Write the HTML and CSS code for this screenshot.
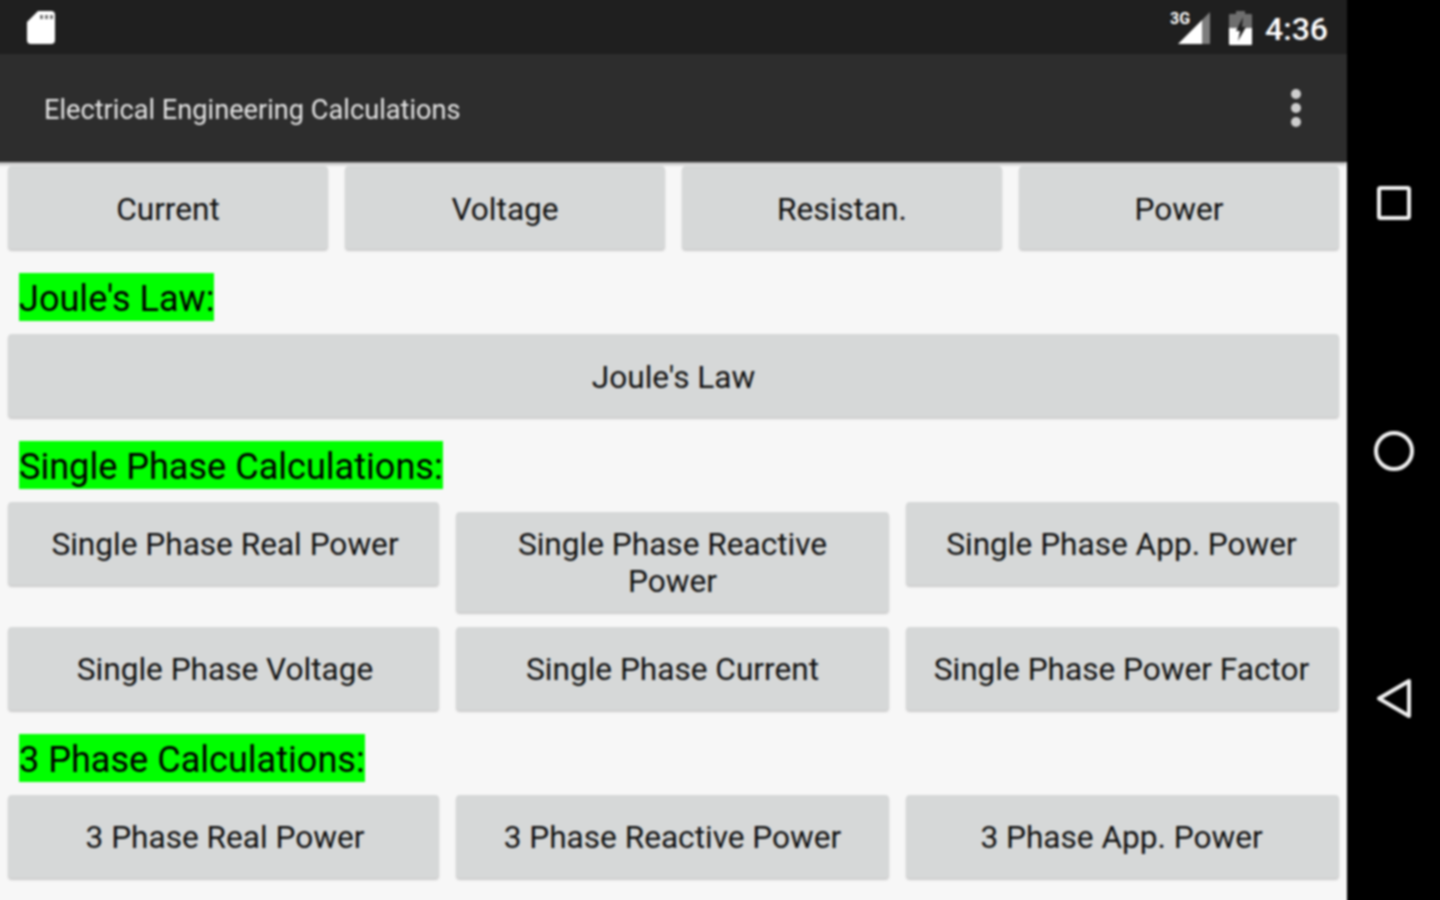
FILE: index.html
```html
<!DOCTYPE html>
<html lang="en">
<head>
  <meta charset="UTF-8">
  <meta name="viewport" content="width=device-width, initial-scale=1.0">
  <title>Electrical Engineering Calculations</title>
  <link rel="stylesheet" href="styles.css">
</head>
<body>
  <div class="device">
    <div class="screen">
      <div class="status-bar">
        <svg class="sd-icon" width="28" height="33" viewBox="0 0 28 33">
          <path fill="#fff" d="M11 0H24Q28 0 28 4V29Q28 33 24 33H4Q0 33 0 29V11Z"/>
          <rect x="13" y="4" width="3" height="4" fill="#777"/>
          <rect x="18" y="4" width="3" height="4" fill="#777"/>
          <rect x="23" y="4" width="3" height="4" fill="#777"/>
        </svg>
        <div class="status-right">
          <div class="signal">
            <svg width="34" height="34" viewBox="0 0 34 34">
              <path fill="#7d7d7d" d="M33 1V33H25V9Z"/>
              <path fill="#fff" d="M25 9V33H1Z"/>
            </svg>
            <span class="signal-type">3G</span>
          </div>
          <svg class="battery" width="23" height="34" viewBox="0 0 23 34">
            <path fill="#6e6e6e" d="M7 0H16V3H22Q23 3 23 4V18H0V4Q0 3 1 3H7Z"/>
            <path fill="#fff" d="M0 17H23V33Q23 34 22 34H1Q0 34 0 33Z"/>
            <path fill="#1f1f1f" d="M14 6 7 20H11L9 30 17 16H13Z"/>
          </svg>
          <span class="clock">4:36</span>
        </div>
      </div>

      <div class="action-bar">
        <span class="app-title">Electrical Engineering Calculations</span>
        <div class="overflow">
          <span class="dot"></span>
          <span class="dot"></span>
          <span class="dot"></span>
        </div>
      </div>

      <div class="content">
        <div class="btn-row cols-4">
          <div class="btn">Current</div>
          <div class="btn">Voltage</div>
          <div class="btn">Resistan.</div>
          <div class="btn">Power</div>
        </div>

        <div class="section-label"><span>Joule's Law:</span></div>
        <div class="btn">Joule's Law</div>

        <div class="section-label"><span>Single Phase Calculations:</span></div>
        <div class="btn-row cols-3">
          <div class="btn">Single Phase Real Power</div>
          <div class="btn two-line">Single Phase Reactive Power</div>
          <div class="btn">Single Phase App. Power</div>
          <div class="btn">Single Phase Voltage</div>
          <div class="btn">Single Phase Current</div>
          <div class="btn">Single Phase Power Factor</div>
        </div>

        <div class="section-label"><span>3 Phase Calculations:</span></div>
        <div class="btn-row cols-3">
          <div class="btn">3 Phase Real Power</div>
          <div class="btn">3 Phase Reactive Power</div>
          <div class="btn">3 Phase App. Power</div>
        </div>
      </div>
    </div>

    <div class="nav-bar">
      <div class="nav-cell">
        <svg width="34" height="34" viewBox="0 0 34 34">
          <rect x="2" y="2" width="30" height="30" rx="1.5" fill="none" stroke="#f0f0f0" stroke-width="4"/>
        </svg>
      </div>
      <div class="nav-cell">
        <svg width="42" height="42" viewBox="0 0 42 42">
          <circle cx="21" cy="21" r="18" fill="none" stroke="#f0f0f0" stroke-width="4"/>
        </svg>
      </div>
      <div class="nav-cell">
        <svg width="36" height="42" viewBox="0 0 36 42">
          <path d="M33 3V38L3 20.5Z" fill="none" stroke="#f0f0f0" stroke-width="4" stroke-linejoin="round"/>
        </svg>
      </div>
    </div>
  </div>
</body>
</html>
```

FILE: styles.css
```css
* {
  margin: 0;
  padding: 0;
  box-sizing: border-box;
}

body {
  font-family: Roboto, "Liberation Sans", sans-serif;
  background: #000;
  overflow: hidden;
}

/* the reference is an upscaled capture, everything is a bit soft.
   4px bleed on every side keeps the blur from fading at the window edge */
.device {
  display: flex;
  width: 1448px;
  height: 908px;
  margin: -4px;
  filter: blur(0.8px);
}

.screen {
  width: 1351px;
  display: flex;
  flex-direction: column;
  background: #f7f7f7;
}

.status-bar {
  height: 58px;
  padding: 15px 19px 0 31px;
  display: flex;
  justify-content: space-between;
  align-items: flex-start;
  background: #1f1f1f;
}

.status-right {
  display: flex;
  align-items: flex-start;
}

.signal {
  position: relative;
  width: 34px;
  height: 34px;
  margin-right: 18px;
}

.signal-type {
  position: absolute;
  top: 0;
  left: -7px;
  font-size: 16px;
  font-weight: 700;
  line-height: 16px;
  color: #fff;
  text-shadow: 0 0 2px #1f1f1f, 0 0 2px #1f1f1f;
}

.battery {
  margin-right: 13px;
}

.clock {
  font-size: 32px;
  font-weight: 500;
  line-height: 36px;
  color: #fff;
}

.action-bar {
  height: 108px;
  padding: 0 46px 0 48px;
  display: flex;
  justify-content: space-between;
  align-items: center;
  background: #2d2d2d;
  box-shadow: 0 2px 3px rgba(0, 0, 0, 0.35);
  position: relative;
}

.app-title {
  padding-top: 4px;
  font-size: 27.2px;
  color: #e4e4e4;
}

.overflow {
  display: flex;
  flex-direction: column;
  gap: 4px;
}

.dot {
  width: 10px;
  height: 10px;
  border-radius: 50%;
  background: #cfcfcf;
}

.content {
  flex: 1;
  padding: 4px 8px 0 12px;
}

.btn-row {
  display: grid;
  align-items: baseline;
}

.cols-4 {
  grid-template-columns: repeat(4, 320px);
  column-gap: 17px;
}

.cols-3 {
  grid-template-columns: 431px 433px 433px;
  column-gap: 17px;
  row-gap: 15px;
}

.btn {
  min-height: 83px;
  padding: 15px 16px 11px;
  display: flex;
  align-items: center;
  justify-content: center;
  text-align: center;
  font-size: 31.6px;
  line-height: 37px;
  color: #111;
  background: #d6d8d8;
  border-radius: 4px;
  box-shadow: 0 2px 2px rgba(0, 0, 0, 0.18);
}

.cols-3 .btn {
  padding-top: 14px;
  padding-bottom: 12px;
}

.cols-3 .btn:nth-child(3n+1) {
  padding-left: 19px;
}

.cols-3 .btn:nth-child(3n) {
  padding-right: 18px;
}

.cols-3 .two-line {
  padding-left: 50px;
  padding-right: 50px;
}

.section-label {
  margin: 24px 0 13px 11px;
  height: 48px;
  font-size: 36.1px;
  line-height: 44px;
  color: #000;
}

.section-label span {
  display: inline-block;
  padding-top: 4px;
  background: #00ff00;
}

.nav-bar {
  flex: 1;
  padding: 83px 4px 81px 0;
  display: flex;
  flex-direction: column;
  background: #000;
}

.nav-cell {
  flex: 1;
  display: flex;
  align-items: center;
  justify-content: center;
}
```
